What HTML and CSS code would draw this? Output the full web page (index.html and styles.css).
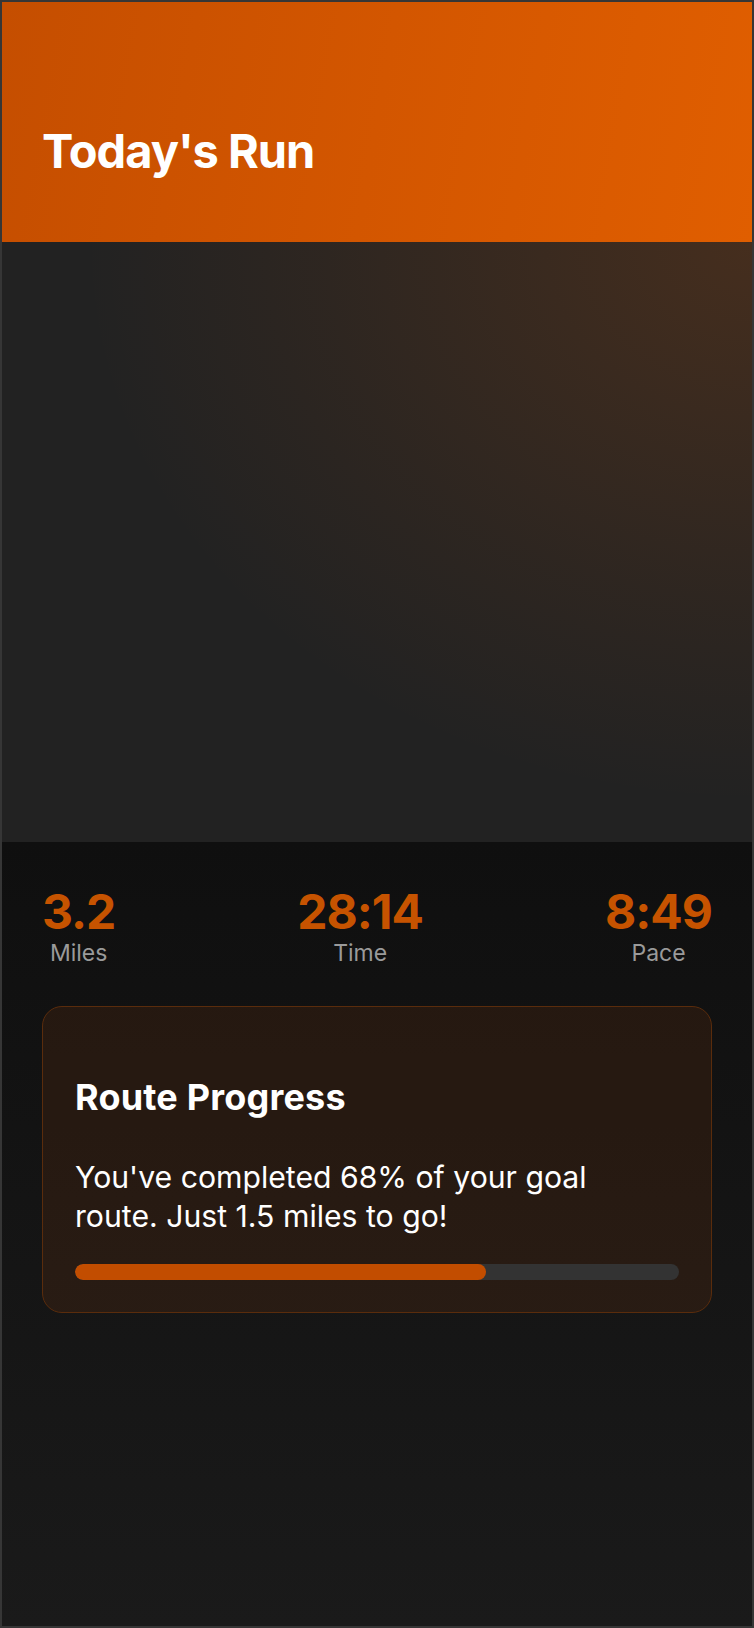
FILE: index.html
```html
<!DOCTYPE html>
<html lang="en">
<head>
<meta charset="utf-8">
<title>Today's Run</title>
<link rel="stylesheet" href="styles.css">
</head>
<body>
<div class="app">
  <header class="header">
    <h1 class="title">Today's Run</h1>
  </header>
  <section class="map"></section>
  <main class="content">
    <div class="stats">
      <div class="stat">
        <div class="stat-value">3.2</div>
        <div class="stat-label">Miles</div>
      </div>
      <div class="stat">
        <div class="stat-value">28:14</div>
        <div class="stat-label">Time</div>
      </div>
      <div class="stat">
        <div class="stat-value">8:49</div>
        <div class="stat-label">Pace</div>
      </div>
    </div>
    <div class="card">
      <h2 class="card-title">Route Progress</h2>
      <p class="card-text">You've completed 68% of your goal route. Just 1.5 miles to go!</p>
      <div class="progress"><div class="progress-fill" style="width: 68%"></div></div>
    </div>
  </main>
</div>
</body>
</html>
```

FILE: styles.css
```css
* {
  box-sizing: border-box;
}

html, body {
  margin: 0;
  padding: 0;
  background: #1a1a1a;
}

body {
  font-family: Inter, "Noto Sans", "Liberation Sans", sans-serif;
  color: #ffffff;
}

.app {
  width: 754px;
  height: 1628px;
  border: 2px solid #363636;
  display: flex;
  flex-direction: column;
  overflow: hidden;
}

.header {
  height: 240px;
  flex: none;
  padding: 121px 40px 0;
  background: linear-gradient(100deg, #c54e00 0%, #d35600 50%, #e05e00 100%);
}

.title {
  margin: 0;
  font-size: 47px;
  line-height: 1.2;
  font-weight: 700;
  letter-spacing: -1px;
}

.map {
  height: 600px;
  flex: none;
  background:
    radial-gradient(ellipse 105% 110% at 100% 0%, rgba(230, 100, 10, 0.18) 0%, rgba(230, 100, 10, 0.06) 55%, rgba(230, 100, 10, 0) 85%),
    #222222;
}

.content {
  flex: 1;
  padding: 40px 40px 0;
  background: linear-gradient(180deg, #0f0f0f 0%, #1a1a1a 100%);
}

.stats {
  display: flex;
  justify-content: space-between;
}

.stat {
  text-align: center;
}

.stat-value {
  font-size: 48px;
  font-weight: 700;
  letter-spacing: -1px;
  color: #c65300;
}

.stat-label {
  font-size: 23px;
  line-height: 1.1;
  color: #9a9a9a;
}

.card {
  margin-top: 40px;
  padding: 32px;
  border: 1px solid #5a2c0c;
  border-radius: 20px;
  background: rgba(200, 85, 10, 0.11);
}

.card-title {
  margin: 36px 0 0;
  font-size: 36px;
  font-weight: 700;
  letter-spacing: 0.2px;
}

.card-text {
  margin: 39px 0 0;
  max-width: 590px;
  font-size: 30.2px;
  line-height: 1.28;
  color: #ffffff;
}

.progress {
  margin-top: 28px;
  height: 16px;
  border-radius: 8px;
  background: #333333;
  overflow: hidden;
}

.progress-fill {
  height: 100%;
  border-radius: 8px;
  background: #c24d00;
}
```
